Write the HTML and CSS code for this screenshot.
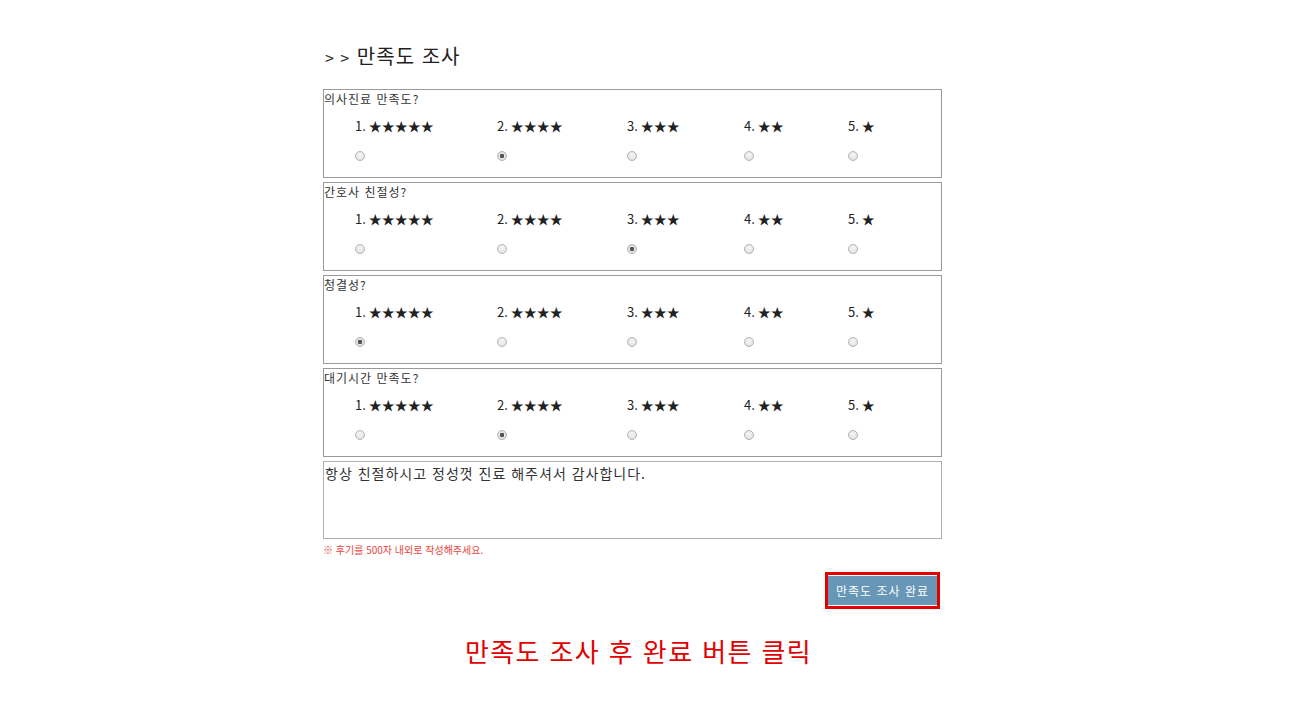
FILE: index.html
```html
<!DOCTYPE html>
<html lang="ko">
<head>
<meta charset="UTF-8">
<title>만족도 조사</title>
<link rel="stylesheet" href="styles.css">
</head>
<body>
<div class="page">
  <h2 class="title"><span class="arrow">&gt; &gt;</span> 만족도 조사</h2>

  <div class="question">
    <div class="q-label">의사진료 만족도?</div>
    <div class="options">
      <label class="opt"><span>1. ★★★★★</span><input type="radio" name="q1"></label>
      <label class="opt"><span>2. ★★★★</span><input type="radio" name="q1" checked></label>
      <label class="opt"><span>3. ★★★</span><input type="radio" name="q1"></label>
      <label class="opt"><span>4. ★★</span><input type="radio" name="q1"></label>
      <label class="opt"><span>5. ★</span><input type="radio" name="q1"></label>
    </div>
  </div>

  <div class="question">
    <div class="q-label">간호사 친절성?</div>
    <div class="options">
      <label class="opt"><span>1. ★★★★★</span><input type="radio" name="q2"></label>
      <label class="opt"><span>2. ★★★★</span><input type="radio" name="q2"></label>
      <label class="opt"><span>3. ★★★</span><input type="radio" name="q2" checked></label>
      <label class="opt"><span>4. ★★</span><input type="radio" name="q2"></label>
      <label class="opt"><span>5. ★</span><input type="radio" name="q2"></label>
    </div>
  </div>

  <div class="question">
    <div class="q-label">청결성?</div>
    <div class="options">
      <label class="opt"><span>1. ★★★★★</span><input type="radio" name="q3" checked></label>
      <label class="opt"><span>2. ★★★★</span><input type="radio" name="q3"></label>
      <label class="opt"><span>3. ★★★</span><input type="radio" name="q3"></label>
      <label class="opt"><span>4. ★★</span><input type="radio" name="q3"></label>
      <label class="opt"><span>5. ★</span><input type="radio" name="q3"></label>
    </div>
  </div>

  <div class="question">
    <div class="q-label">대기시간 만족도?</div>
    <div class="options">
      <label class="opt"><span>1. ★★★★★</span><input type="radio" name="q4"></label>
      <label class="opt"><span>2. ★★★★</span><input type="radio" name="q4" checked></label>
      <label class="opt"><span>3. ★★★</span><input type="radio" name="q4"></label>
      <label class="opt"><span>4. ★★</span><input type="radio" name="q4"></label>
      <label class="opt"><span>5. ★</span><input type="radio" name="q4"></label>
    </div>
  </div>

  <textarea class="review">항상 친절하시고 정성껏 진료 해주셔서 감사합니다.</textarea>
  <p class="note">※ 후기를 500자 내외로 작성해주세요.</p>

  <div class="actions">
    <div class="highlight"><button class="submit">만족도 조사 완료</button></div>
  </div>

  <p class="caption">만족도 조사 후 완료 버튼 클릭</p>
</div>
</body>
</html>
```

FILE: styles.css
```css
body {
  margin: 0;
  background: #ffffff;
  font-family: "Noto Sans CJK KR", "Noto Sans", sans-serif;
  color: #333333;
}

.page {
  width: 619px;
  margin-left: 323px;
  padding-top: 41px;
}

.title {
  margin: 0 0 17px 2px;
  font-size: 20px;
  font-weight: normal;
  line-height: 29px;
  letter-spacing: 1px;
  color: #222222;
}

.title .arrow {
  font-size: 16px;
  letter-spacing: 1px;
  color: #333333;
}

.question {
  border: 1px solid #9a9a9a;
  height: 87px;
  margin-bottom: 4px;
}

.q-label {
  font-size: 12px;
  line-height: 17px;
  letter-spacing: 1px;
  color: #333333;
}

.options {
  display: grid;
  grid-template-columns: 142px 130px 117px 104px 1fr;
  padding: 10px 0 0 31px;
}

.opt {
  display: flex;
  flex-direction: column;
  align-items: flex-start;
  font-size: 13px;
  line-height: 18px;
  color: #222222;
}

.opt input {
  appearance: none;
  -webkit-appearance: none;
  width: 10px;
  height: 10px;
  margin: 16px 0 0 0;
  border: 1px solid #b4b4b4;
  border-radius: 50%;
  background: radial-gradient(circle at 50% 35%, #f6f6f6, #dcdcdc);
}

.opt input:checked {
  background: radial-gradient(circle, #555555 0, #555555 2px, #e6e6e6 2.5px, #d8d8d8 100%);
}

.review {
  display: block;
  box-sizing: border-box;
  width: 619px;
  height: 78px;
  margin: 1px 0 0 0;
  padding: 1px 1px;
  border: 1px solid #b0b0b0;
  font-family: "Noto Sans CJK KR", "Noto Sans", sans-serif;
  font-size: 14px;
  line-height: 20px;
  letter-spacing: 1px;
  color: #333333;
  resize: none;
}

.note {
  margin: 4px 0 0 0;
  font-size: 10px;
  line-height: 14px;
  color: #e8453c;
}

.actions {
  display: flex;
  justify-content: flex-end;
  padding: 15px 2px 0 0;
}

.highlight {
  border: 3px solid #e50000;
  padding: 1px 0;
}

.submit {
  display: block;
  width: 109px;
  height: 29px;
  border: 0;
  padding: 0;
  background: #6796b6;
  color: #ffffff;
  font-family: "Noto Sans CJK KR", "Noto Sans", sans-serif;
  font-size: 12px;
  letter-spacing: 1px;
}

.caption {
  width: 631px;
  margin: 24px 0 0 0;
  text-align: center;
  font-size: 26px;
  line-height: 36px;
  letter-spacing: 1.4px;
  color: #e00000;
}
```
